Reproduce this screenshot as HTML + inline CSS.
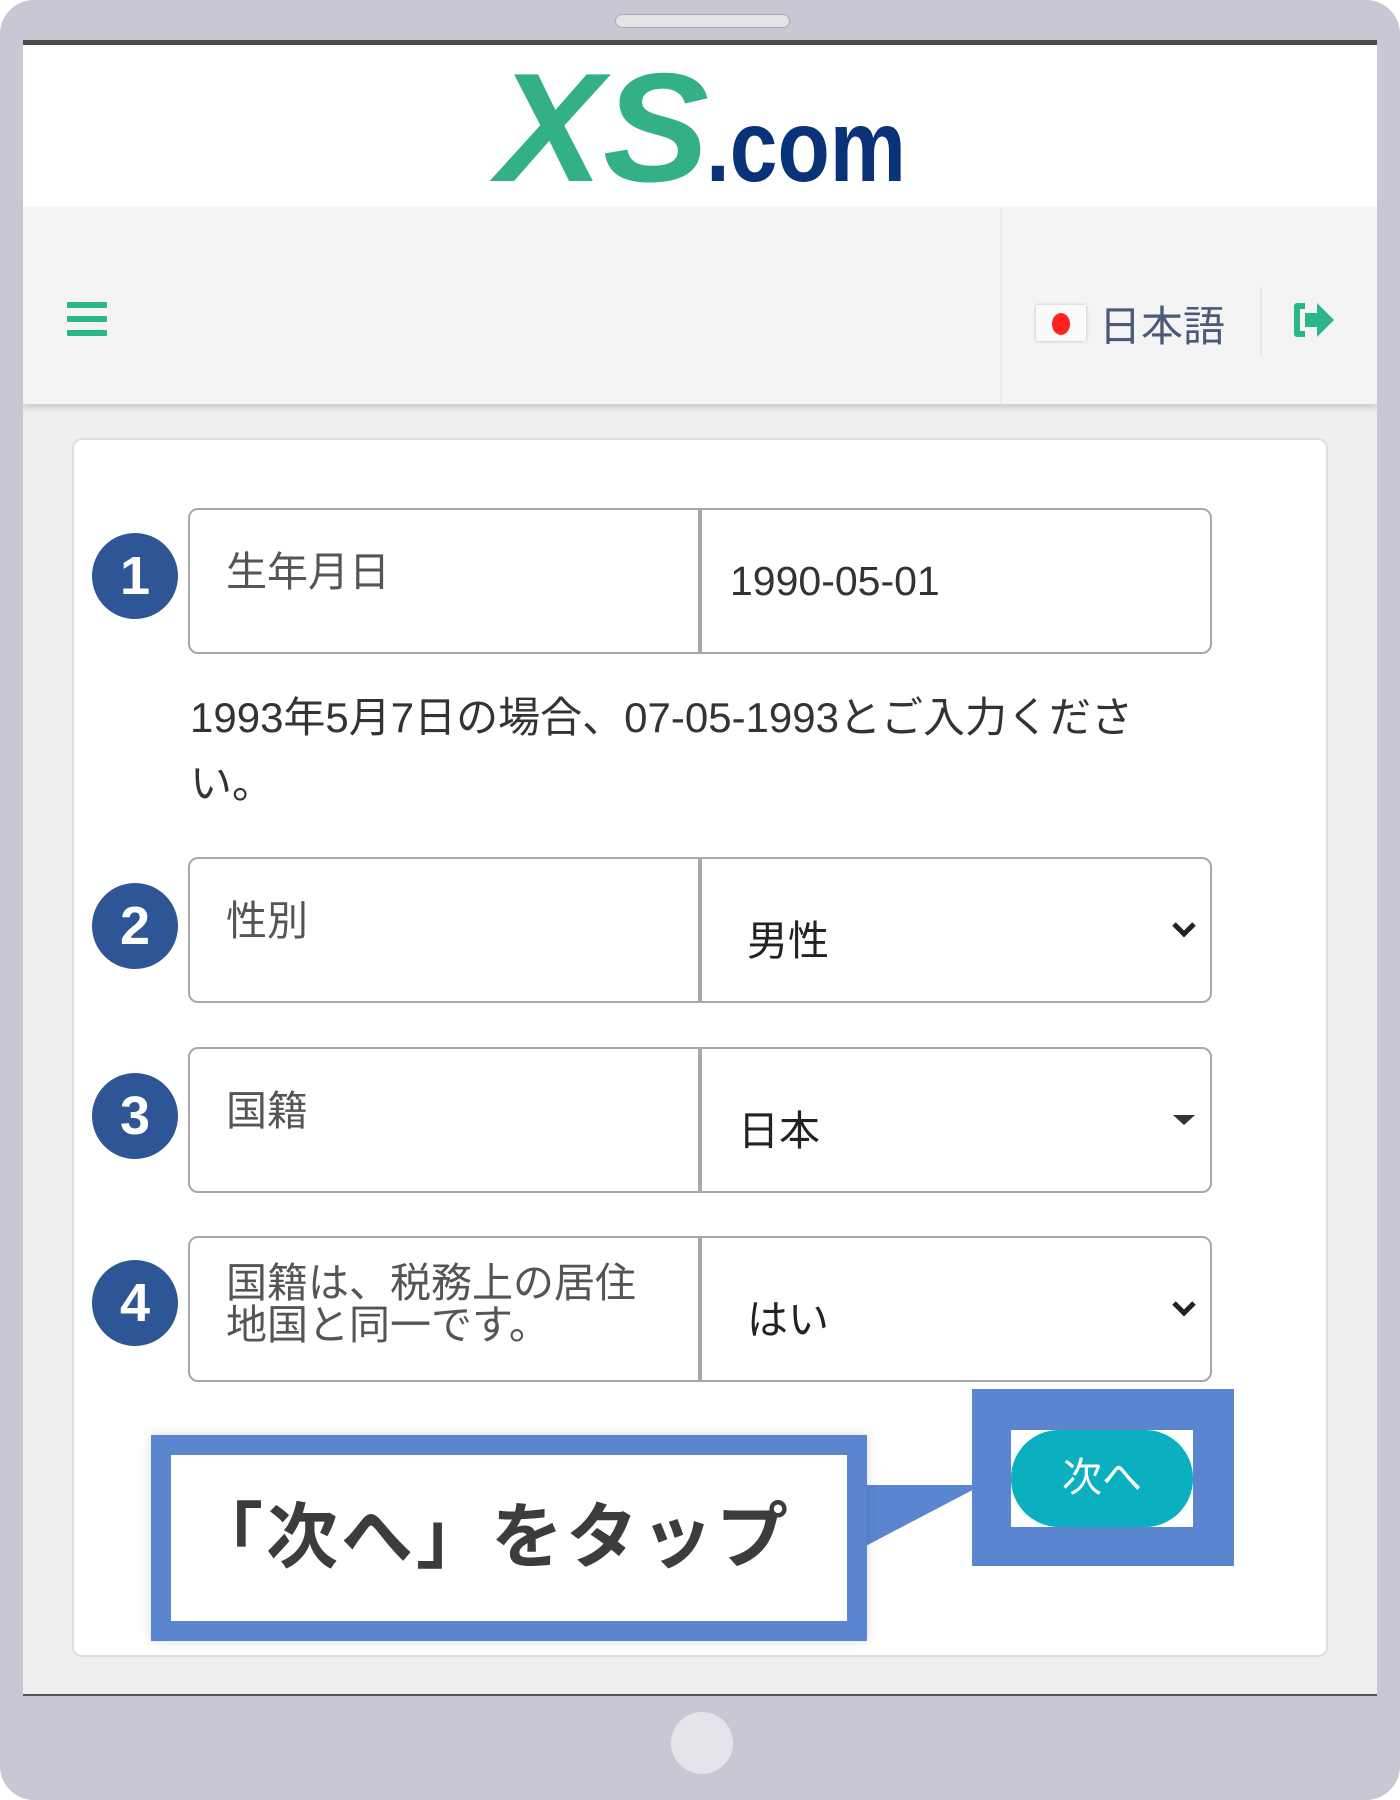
<!DOCTYPE html>
<html><head><meta charset="utf-8"><style>
*{margin:0;padding:0;box-sizing:border-box}
body{width:1400px;height:1800px;background:#fff;font-family:"Liberation Sans","Noto Sans CJK JP",sans-serif;position:relative;overflow:hidden}
.dev{position:absolute;left:0;top:0;width:1400px;height:1800px;background:#c8c8d4;border-radius:34px}
.spk{position:absolute;left:615px;top:14px;width:175px;height:14px;border-radius:7px;background:#e4e4e4;border:1px solid #aaa}
.scr{position:absolute;left:23px;top:40px;width:1354px;height:1656px;background:#efefef;border-top:5px solid #4a4a4a;border-bottom:2px solid #555;overflow:hidden}
.logo{position:absolute;left:0;top:0;width:1354px;height:162px;background:#fff}
.nav{position:absolute;left:0;top:162px;width:1354px;height:197px;background:#f4f4f4;box-shadow:0 4px 6px rgba(0,0,0,.15)}
.card{position:absolute;left:49px;top:393px;width:1256px;height:1219px;background:#fff;border:2px solid #dcdce4;border-radius:10px}
.row{position:absolute;left:114px;width:1024px;height:146px;border:2px solid #a8a8a8;border-radius:10px}
.row .sp{position:absolute;left:508px;top:-2px;bottom:-2px;width:4px;background:#a8a8a8}
.lab{position:absolute;left:36px;top:40px;font-size:41px;color:#555;line-height:44px}
.val{position:absolute;left:548px;top:48px;font-size:41px;color:#222}
.num{position:absolute;left:18px;width:86px;height:86px;border-radius:50%;background:#2e5596;color:#fff;font-weight:bold;font-size:54px;text-align:center;line-height:86px}
.chev{position:absolute;right:12px;top:60px}
</style></head><body>
<div class="dev"></div>
<div class="spk"></div>
<div class="scr">
 <div class="logo">
  <svg width="1354" height="162" style="position:absolute;left:0;top:0">
   <text x="474" y="136" font-size="155" font-weight="bold" font-style="italic" fill="#33b084" textLength="212" lengthAdjust="spacingAndGlyphs" font-family="Liberation Sans">XS</text>
   <text x="683" y="136" font-size="102" font-weight="bold" fill="#0a3278" textLength="200" lengthAdjust="spacingAndGlyphs" font-family="Liberation Sans">.com</text>
  </svg>
 </div>
 <div class="nav">
  <div style="position:absolute;left:44px;top:95px;width:40px">
   <div style="height:6px;background:#2bb58a;margin-bottom:8px;border-radius:1px"></div>
   <div style="height:6px;background:#2bb58a;margin-bottom:8px;border-radius:1px"></div>
   <div style="height:6px;background:#2bb58a;border-radius:1px"></div>
  </div>
  <div style="position:absolute;left:977px;top:0;width:2px;height:197px;background:#ebebeb"></div>
  <div style="position:absolute;left:1013px;top:98px;width:50px;height:36px;background:#fafafa;box-shadow:0 0 3px #bbb"><div style="position:absolute;left:16px;top:8px;width:18px;height:22px;border-radius:50%;background:#f22"></div></div>
  <div style="position:absolute;left:1076px;top:86px;font-size:42px;color:#4a5a78">日本語</div>
  <div style="position:absolute;left:1237px;top:80px;width:2px;height:70px;background:#e8e8e8"></div>
  <svg style="position:absolute;left:1268px;top:92px" width="46" height="42" viewBox="0 0 46 42"><path d="M14 4H6Q3 4 3 8V34Q3 38 6 38H14V32H9V10H14Z" fill="#2bb58a"/><path d="M14 14H26V4L43 21L26 38V28H14Z" fill="#2bb58a"/></svg>
 </div>
 <div class="card">
  <div class="num" style="top:93px">1</div>
  <div class="row" style="top:68px"><div class="sp"></div><div class="lab">生年月日</div><div class="val" style="left:540px;color:#333">1990-05-01</div></div>
  <div style="position:absolute;left:116px;top:245px;font-size:42px;line-height:66px;color:#333;width:1060px">1993年5月7日の場合、07-05-1993とご入力くださ<br>い。</div>
  <div class="num" style="top:443px">2</div>
  <div class="row" style="top:417px"><div class="sp"></div><div class="lab">性別</div><div class="val" style="left:557px">男性</div>
   <svg class="chev" width="28" height="20" viewBox="0 0 28 20"><path d="M4 5L14 15L24 5" stroke="#222" stroke-width="5" fill="none"/></svg></div>
  <div class="num" style="top:633px">3</div>
  <div class="row" style="top:607px"><div class="sp"></div><div class="lab">国籍</div><div class="val">日本</div>
   <svg class="chev" width="28" height="20" viewBox="0 0 28 20" style="top:62px"><path d="M3 4H25L14 14Z" fill="#333"/></svg></div>
  <div class="num" style="top:820px">4</div>
  <div class="row" style="top:796px"><div class="sp"></div><div class="lab" style="top:24px;line-height:42px">国籍は、税務上の居住<br>地国と同一です。</div><div class="val" style="left:557px">はい</div>
   <svg class="chev" width="28" height="20" viewBox="0 0 28 20"><path d="M4 5L14 15L24 5" stroke="#222" stroke-width="5" fill="none"/></svg></div>
  <div style="position:absolute;left:898px;top:949px;width:262px;height:177px;background:#5b86cf">
   <div style="position:absolute;left:39px;top:41px;width:182px;height:97px;background:#fff">
    <div style="position:absolute;left:0;top:0;width:182px;height:97px;border-radius:48px;background:#0bb0c0;color:#fff;font-size:40px;text-align:center;line-height:97px">次へ</div>
   </div>
  </div>
  <svg style="position:absolute;left:765px;top:1020px" width="140" height="140"><path d="M0 25H143L0 100Z" fill="#5b86cf"/></svg>
  <div style="position:absolute;left:77px;top:995px;width:716px;height:206px;background:#5b86cf;box-shadow:0 0 10px rgba(0,0,0,.15)">
   <div style="position:absolute;left:20px;top:20px;width:676px;height:166px;background:#fff;font-size:72px;font-weight:bold;color:#3c3c3c;line-height:166px;padding-left:20px;letter-spacing:3px;white-space:nowrap">「次へ」をタップ</div>
  </div>
 </div>
</div>
<div style="position:absolute;left:671px;top:1712px;width:62px;height:62px;border-radius:50%;background:#e4e4ea"></div>
</body></html>
